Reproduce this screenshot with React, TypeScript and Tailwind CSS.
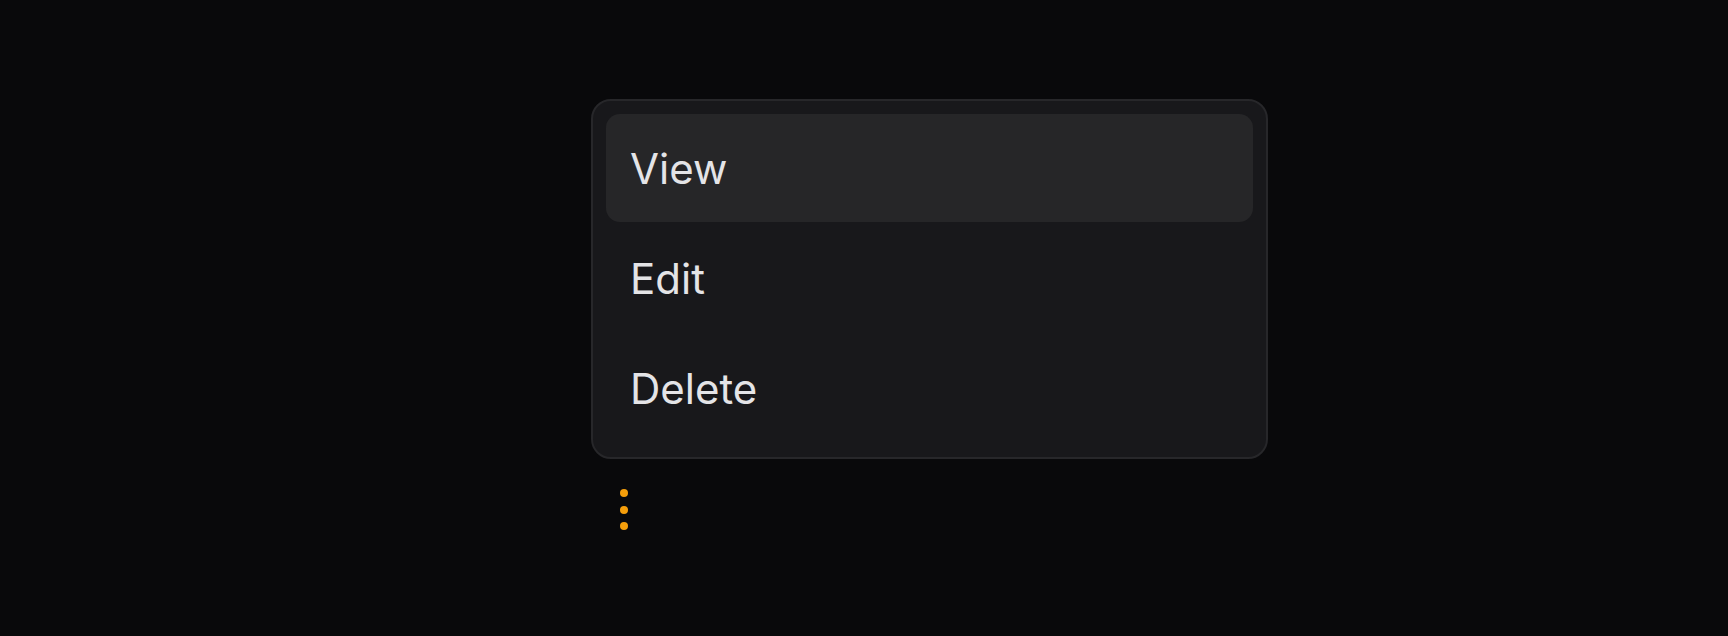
export default function App() {
  const items = ['View', 'Edit', 'Delete'];

  return (
    <div
      className="min-h-screen w-full bg-[#09090b] pt-[99px] pl-[591px]"
      style={{ fontFamily: 'Inter, "Noto Sans", sans-serif' }}
    >
      <div className="flex w-[677px] flex-col gap-[2px] rounded-[20px] border-2 border-[#27272a] bg-[#18181b] p-[13px] pb-[15px]">
        {items.map((item, idx) => (
          <div
            key={item}
            className={
              idx === 0
                ? 'flex h-[108px] items-center rounded-[14px] bg-[#262628] px-[24px] text-[42px] text-[#e4e4e7]'
                : 'flex h-[108px] items-center rounded-[14px] px-[24px] text-[42px] text-[#e4e4e7]'
            }
          >
            {item}
          </div>
        ))}
      </div>

      <button className="mt-[30px] ml-[29px] flex flex-col gap-[8.5px]">
        <span className="h-2 w-2 rounded-full bg-[#f59e0b]" />
        <span className="h-2 w-2 rounded-full bg-[#f59e0b]" />
        <span className="h-2 w-2 rounded-full bg-[#f59e0b]" />
      </button>
    </div>
  );
}
